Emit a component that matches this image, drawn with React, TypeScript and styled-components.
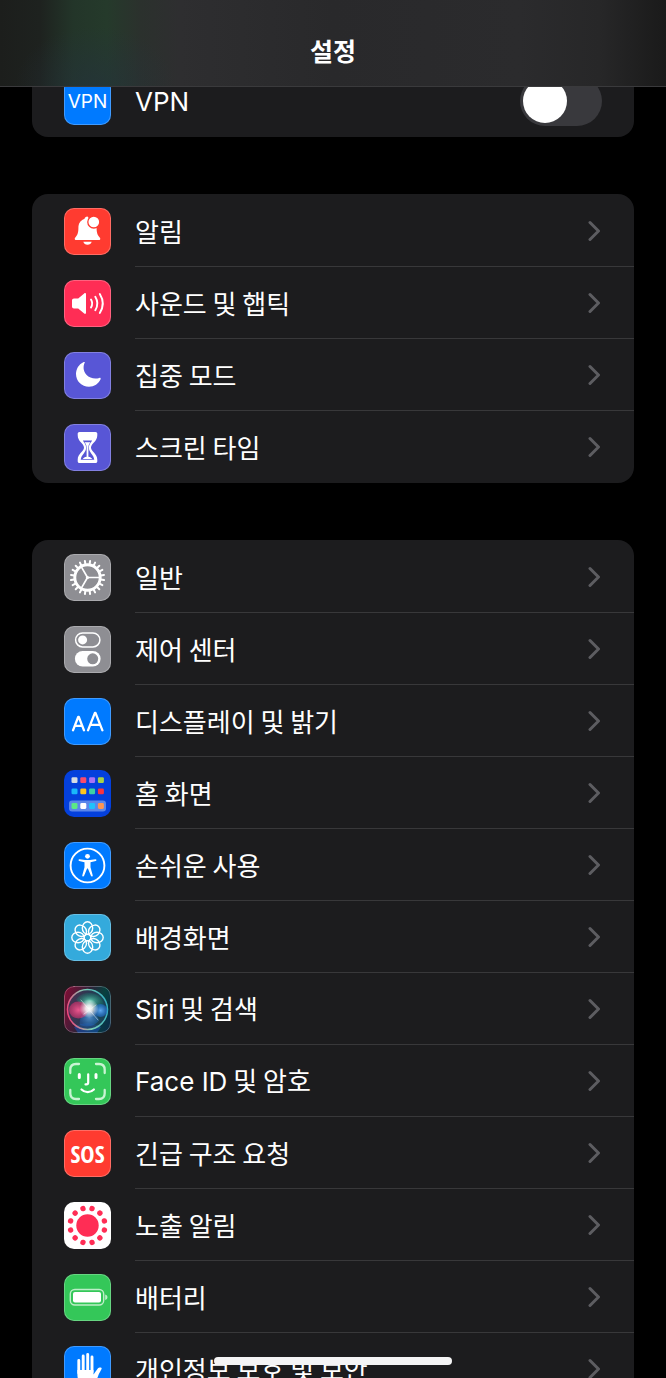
import React, { useState } from 'react';
import styled, { createGlobalStyle } from 'styled-components';

const GlobalStyle = createGlobalStyle`
  * { box-sizing: border-box; }
  html, body { margin: 0; background: #000; }
  body {
    color: #fff;
    font-family: "Noto Sans CJK KR", sans-serif;
    font-size: 26px;
    -webkit-font-smoothing: antialiased;
  }
`;

const Screen = styled.div`
  position: relative;
  height: 100vh;
  overflow: hidden;
  background: #000;
`;

const Header = styled.header`
  position: fixed;
  inset: 0 0 auto 0;
  z-index: 2;
  padding: 34px 32px 20px;
  border-bottom: 1px solid #3a3a3c;
  text-align: center;
  background:
    radial-gradient(ellipse 80px 60px at 95px 100%, rgba(36, 50, 62, 0.6), rgba(36, 50, 62, 0)),
    linear-gradient(to right, #1c1e1c 0, #1e221f 6%, #233529 11%, #253a2b 16%, #2b312d 21%, #2e2e30 27%, #29292b 50%, #2b2b2d 78%, #272728 90%, #1a1a1a 100%);
`;

const Title = styled.h1`
  margin: 0;
  font-size: 25px;
  line-height: 32px;
  font-weight: 600;
`;

const List = styled.main`
  display: flex;
  flex-direction: column;
  gap: 57px;
  padding: 64px 32px 0;
`;

const Group = styled.section`
  flex-shrink: 0;
  overflow: hidden;
  padding-top: 1px;
  border-radius: 16px;
  background: #1c1c1e;
`;

const Row = styled.a`
  display: flex;
  align-items: center;
  gap: 24px;
  height: 72px;
  padding-left: 32px;
  color: inherit;
  text-decoration: none;
`;

const SwitchRow = styled(Row).attrs({ as: 'label' })``;

const RowBody = styled.span`
  flex: 1;
  align-self: stretch;
  display: flex;
  align-items: center;
  justify-content: space-between;
  padding-right: 32px;
  border-bottom: 1px solid #38383a;
  line-height: 36px;

  ${Row}:last-child > & { border-bottom-color: transparent; }
`;

const Latin = styled.span`
  font-family: Inter, sans-serif;
`;

const Tile = styled.span<{ $bg: string; $plain?: boolean }>`
  flex: none;
  display: block;
  width: 47px;
  height: 47px;
  overflow: hidden;
  border-radius: 10px;
  background: ${(p) => p.$bg};
  box-shadow: ${(p) => (p.$plain ? 'none' : 'inset 0 0 0 1px rgba(255, 255, 255, 0.25)')};

  svg { display: block; width: 47px; height: 47px; }
`;

const TileText = styled.span<{ $size: number; $weight: number; $family: string }>`
  display: block;
  text-align: center;
  white-space: nowrap;
  line-height: 47px;
  font-family: ${(p) => p.$family};
  font-size: ${(p) => p.$size}px;
  font-weight: ${(p) => p.$weight};
`;

const Switch = styled.input`
  appearance: none;
  display: flex;
  align-items: center;
  width: 82px;
  height: 50px;
  margin: 0;
  padding: 3px;
  border-radius: 25px;
  background: #39393d;

  &::before {
    content: '';
    width: 44px;
    height: 44px;
    border-radius: 50%;
    background: #fff;
  }
  &:checked { background: #34c759; justify-content: flex-end; }
`;

const HomeIndicator = styled.div`
  position: fixed;
  bottom: 13px;
  left: 50%;
  z-index: 2;
  width: 238px;
  height: 8px;
  margin-left: -119px;
  border-radius: 4px;
  background: #f4f4f5;
`;

const Chevron = () => (
  <svg width="14" height="22" viewBox="0 0 14 22" fill="none" stroke="#5d5d61" strokeWidth="3" strokeLinecap="round" strokeLinejoin="round" aria-hidden="true">
    <path d="M2 2.500 L10.500 11 L2 19.500" />
  </svg>
);

const Svg = ({ children }: { children: React.ReactNode }) => (
  <svg viewBox="0 0 47 47" fill="none" strokeLinecap="round" strokeLinejoin="round" aria-hidden="true">
    {children}
  </svg>
);

const around = (n: number, offset = 0) => Array.from({ length: n }, (_, i) => offset + (360 / n) * i);

const Bell = () => (
  <Svg>
    <path fill="#fff" d="M23.500 8.500c-1.700 0-2.800 1-3.100 2.400-4.200 1.400-6 4.600-6 9.100 0 5-1.100 7.300-2.700 9-.7.700-1 1.200-1 1.700 0 .8.500 1.300 1.500 1.300h22.600c1 0 1.500-.5 1.500-1.300 0-.5-.3-1-1-1.700-1.600-1.700-2.700-4-2.700-9z" />
    <path fill="#fff" d="M19.300 33.700h8.400c-.5 1.800-2.100 3-4.200 3s-3.700-1.200-4.200-3z" />
    <circle cx="29.800" cy="14" r="6" fill="#fff" stroke="#ff3b30" strokeWidth="1.300" />
  </Svg>
);

const Speaker = () => (
  <Svg>
    <path fill="#fff" d="M10 18.500h4.200l6-5.100c.9-.7 1.800-.3 1.800.8v18.600c0 1.100-.9 1.500-1.800.8l-6-5.100H10c-1.200 0-2-.8-2-2v-6c0-1.200.8-2 2-2z" />
    <path stroke="#fff" strokeWidth="1.900" d="M27 19.500c1.500 2.500 1.500 5.500 0 8M31.300 16.800c2.600 4.200 2.600 9.200 0 13.400M35.800 14c3.900 6.200 3.900 12.800 0 19" />
  </Svg>
);

const Moon = () => (
  <Svg>
    <path fill="#fff" d="M20.700 10.700c-1.700 3.300-1.600 8.400 1.700 12 3.300 3.500 8.400 4.700 12.900 3.200 1-.3 1.700.3 1.300 1.400-2 4.500-6.400 7.400-11.600 7.400-7.300 0-13-5.600-13-12.700 0-5 2.700-9.600 7.300-11.800 1-.5 1.800-.4 1.400.5z" />
  </Svg>
);

const Hourglass = () => (
  <Svg>
    <path fill="#fff" d="M15.500 8h16c1.100 0 1.800.8 1.800 1.800v1.400c0 6.300-6.300 8.400-6.300 12.300s6.300 6 6.300 12.300v1.400c0 1-.7 1.800-1.800 1.800h-16c-1.100 0-1.800-.8-1.800-1.800v-1.400c0-6.300 6.300-8.400 6.300-12.300s-6.300-6-6.300-12.300V9.800c0-1 .7-1.800 1.800-1.800z" />
    <path fill="#5856d6" d="M18.800 16.600h9.400c-1.500 2.300-3.300 4-3.300 6.900 0 5.500 4.800 6.800 5.400 12.300H16.700c.6-5.500 5.400-6.800 5.400-12.300 0-2.900-1.800-4.600-3.300-6.900z" />
    <path fill="#fff" d="M20.500 18.200h6c-1 1.500-2.100 2.300-2.100 5.300v9.200c1.700.2 3.200.9 3.800 2.300h-9.400c.6-1.400 2.100-2.100 3.800-2.300v-9.200c0-3-1.100-3.800-2.100-5.300z" />
  </Svg>
);

const Gear = () => (
  <Svg>
    <circle cx="23.500" cy="23.500" r="12.700" stroke="#fff" strokeWidth="2.900" />
    {around(20, 9).map((a) => (
      <path key={a} transform={`rotate(${a} 23.500 23.500)`} stroke="#fff" strokeWidth="2" d="M23.500 10V6.800" />
    ))}
    {around(3).map((a) => (
      <path key={a} transform={`rotate(${a} 23.500 23.500)`} stroke="#fff" strokeWidth="1.700" d="M23.500 23.500H35.500" />
    ))}
    <circle cx="23.500" cy="23.500" r="1.600" fill="#fff" />
  </Svg>
);

const Toggles = () => (
  <Svg>
    <rect x="11.600" y="6.900" width="24.300" height="14" rx="7" stroke="#fff" strokeWidth="1.500" />
    <circle cx="18.600" cy="13.900" r="4.500" fill="#fff" />
    <rect x="10.900" y="25.100" width="25.700" height="15.400" rx="7.700" fill="#fff" />
    <circle cx="28.700" cy="32.800" r="5.500" fill="#8e8e93" />
  </Svg>
);

const LetterSizes = () => (
  <Svg>
    <path stroke="#fff" strokeWidth="2.300" d="M9 32.300l5.200-13.300h.6L20 32.300M11 27.900h7" />
    <path stroke="#fff" strokeWidth="2.300" d="M24 32.300l6.900-17.500h.6l6.900 17.500M26.300 26.800h9.800" />
  </Svg>
);

const appColors = [
  ['#d5dbe3', '#fb4b6b', '#a872f5', '#a8d246'],
  ['#19b7fa', '#fdc51d', '#3bd2a4', '#fa3340'],
  ['#5bea85', '#ffffff', '#20c2fb', '#fd9552'],
];

const HomeGrid = () => (
  <Svg>
    <rect x="5" y="30.500" width="37" height="11" rx="3" fill="#5a86ea" />
    {appColors.map((line, r) =>
      line.map((color, c) => (
        <rect key={`${r}${c}`} x={7.500 + c * 8.800} y={[7.300, 18.500, 33.100][r]} width="6" height="5.800" rx="1.300" fill={color} />
      )),
    )}
  </Svg>
);

const Accessibility = () => (
  <Svg>
    <circle cx="23.500" cy="23.500" r="16.900" stroke="#fff" strokeWidth="1.900" />
    <circle cx="23.500" cy="14.300" r="2.400" fill="#fff" />
    <path fill="#fff" d="M15.500 17.300l5.500.8h5l5.500-.8c1.100-.1 1.400 1.300.3 1.600l-5.300 1.400v5l2.200 8c.3 1.300-1.300 1.700-1.800.5l-3-7.300h-.8l-3 7.300c-.5 1.200-2.100.8-1.800-.5l2.200-8v-5l-5.300-1.400c-1.100-.3-.8-1.700.3-1.600z" />
  </Svg>
);

const Flower = () => (
  <Svg>
    {around(8).map((a) => (
      <ellipse key={a} cx="23.500" cy="14" rx="5.200" ry="6.200" transform={`rotate(${a} 23.500 23.500)`} stroke="#fff" strokeWidth="1.400" />
    ))}
    <circle cx="23.500" cy="23.500" r="3.200" stroke="#fff" strokeWidth="1.200" />
  </Svg>
);

const Siri = () => (
  <Svg>
    <defs>
      <linearGradient id="siriBack" x1="0" y1="0.300" x2="1" y2="0.600">
        <stop offset="0" stopColor="#7a0f35" />
        <stop offset="0.450" stopColor="#2c2238" />
        <stop offset="0.750" stopColor="#07413f" />
        <stop offset="1" stopColor="#0a2f48" />
      </linearGradient>
      <linearGradient id="siriRing" x1="0" y1="0.600" x2="1" y2="0.400">
        <stop offset="0" stopColor="#f0447c" />
        <stop offset="0.500" stopColor="#7fd0b5" />
        <stop offset="1" stopColor="#35b0c0" />
      </linearGradient>
      <radialGradient id="siriPink"><stop offset="0" stopColor="#ff5c96" stopOpacity="0.900" /><stop offset="1" stopColor="#e0306e" stopOpacity="0.550" /></radialGradient>
      <radialGradient id="siriTeal"><stop offset="0" stopColor="#6fd8bd" stopOpacity="0.950" /><stop offset="1" stopColor="#0f8a70" stopOpacity="0.200" /></radialGradient>
      <radialGradient id="siriBlue"><stop offset="0" stopColor="#69b4ff" stopOpacity="0.900" /><stop offset="1" stopColor="#1b70dc" stopOpacity="0.500" /></radialGradient>
      <radialGradient id="siriGlow"><stop offset="0" stopColor="#fff" /><stop offset="0.350" stopColor="#fff" stopOpacity="0.850" /><stop offset="1" stopColor="#fff" stopOpacity="0" /></radialGradient>
    </defs>
    <rect width="47" height="47" fill="url(#siriBack)" />
    <path fill="#1b4cad" opacity="0.600" d="M10 41c8-5 19-5 27 0l-4 6H14z" />
    <circle cx="23.500" cy="23.500" r="20" fill="#2b4a68" fillOpacity="0.550" stroke="url(#siriRing)" strokeWidth="1.500" />
    <path fill="url(#siriTeal)" d="M12 14C18 3 36 5 39.500 17c1 5-4 6-14 6.500C20 20 16 17 12 14z" />
    <path fill="url(#siriBlue)" opacity="0.700" d="M25 23c-7 4-10 9-9 16 7 3 16 1 19-5-2-5-5-8-10-11z" />
    <ellipse cx="14.500" cy="24" rx="9.500" ry="8.500" fill="url(#siriPink)" />
    <ellipse cx="36.500" cy="24.500" rx="7" ry="6.500" fill="url(#siriBlue)" />
    <circle cx="25" cy="22.500" r="9.500" fill="url(#siriGlow)" />
    <path stroke="#fff" strokeOpacity="0.450" strokeWidth="1" d="M17 14l17 20M20 28l12-9" />
    <rect x="0.500" y="0.500" width="46" height="46" rx="9.500" stroke="#fff" strokeOpacity="0.250" />
  </Svg>
);

const Face = () => (
  <Svg>
    <path stroke="#c9f4d3" strokeWidth="2.300" d="M6.300 15v-3.200C6.300 8 8.300 6 12 6h3M32 6h3c3.700 0 5.700 2 5.700 5.800V15M6.300 32v3.200c0 3.800 2 5.800 5.700 5.800h3M32 41h3c3.700 0 5.700-2 5.700-5.800V32" />
    <path stroke="#fff" strokeWidth="3" d="M15.300 16.500v3M32 16.500v3" />
    <path stroke="#fff" strokeWidth="2.200" d="M24.200 16.300v8.200c0 1.300-.6 1.900-1.900 1.900h-.8M17.500 31.500c3.500 3.500 8.900 3.500 12.400 0" />
  </Svg>
);

const Exposure = () => (
  <Svg>
    <circle cx="23.500" cy="23.500" r="11.200" fill="#ff2d55" />
    {around(12, 15).map((a) => (
      <circle key={a} cx="23.500" cy="6" r="2.700" transform={`rotate(${a} 23.500 23.500)`} fill="#ff2d55" />
    ))}
  </Svg>
);

const Battery = () => (
  <Svg>
    <rect x="6.300" y="15.500" width="33.400" height="15.500" rx="4.500" stroke="#bdeec8" strokeWidth="1.400" />
    <rect x="9" y="18" width="28" height="10.500" rx="2" fill="#fff" />
    <path fill="#bdeec8" d="M41.200 20.500c3 .9 3 4.600 0 5.500z" />
  </Svg>
);

const Hand = () => (
  <Svg>
    <path stroke="#fff" strokeWidth="2.900" d="M14.800 14.500V27M19.200 10V25M23.700 8.500V25M28 11V26" />
    <path fill="#fff" d="M13.400 24h16.100v4.500c1.200-1.500 2.600-4 4.300-6.100 1-1.200 3.900-1.300 3.900-.2 0 1-2.200 4.300-3.500 7.500-2 5.800-4.500 9.800-10.500 9.800-6.500 0-10.300-4-10.300-11z" />
  </Svg>
);

type Item = { label: string; latin?: string; icon: React.ReactNode; bg: string; plain?: boolean };

const attention: Item[] = [
  { label: '알림', icon: <Bell />, bg: '#ff3b30' },
  { label: '사운드 및 햅틱', icon: <Speaker />, bg: '#ff2d55' },
  { label: '집중 모드', icon: <Moon />, bg: '#5856d6' },
  { label: '스크린 타임', icon: <Hourglass />, bg: '#5856d6' },
];

const general: Item[] = [
  { label: '일반', icon: <Gear />, bg: '#8e8e93' },
  { label: '제어 센터', icon: <Toggles />, bg: '#8e8e93' },
  { label: '디스플레이 및 밝기', icon: <LetterSizes />, bg: '#007aff' },
  { label: '홈 화면', icon: <HomeGrid />, bg: '#0440dc', plain: true },
  { label: '손쉬운 사용', icon: <Accessibility />, bg: '#007aff' },
  { label: '배경화면', icon: <Flower />, bg: '#34aadc' },
  { latin: 'Siri', label: ' 및 검색', icon: <Siri />, bg: '#29202f', plain: true },
  { latin: 'Face ID', label: ' 및 암호', icon: <Face />, bg: '#34c759' },
  {
    label: '긴급 구조 요청',
    icon: <TileText $size={24} $weight={700} $family='"Open Sans Condensed", "Liberation Sans Narrow", "DejaVu Sans Condensed", sans-serif'>SOS</TileText>,
    bg: '#ff3b30',
  },
  { label: '노출 알림', icon: <Exposure />, bg: '#ffffff', plain: true },
  { label: '배터리', icon: <Battery />, bg: '#34c759' },
  { label: '개인정보 보호 및 보안', icon: <Hand />, bg: '#007aff' },
];

const SettingsGroup = ({ items }: { items: Item[] }) => (
  <Group>
    {items.map((item) => (
      <Row key={item.label} href="#">
        <Tile $bg={item.bg} $plain={item.plain}>{item.icon}</Tile>
        <RowBody>
          <span>
            {item.latin && <Latin>{item.latin}</Latin>}
            {item.label}
          </span>
          <Chevron />
        </RowBody>
      </Row>
    ))}
  </Group>
);

export default function App() {
  const [vpn, setVpn] = useState(false);
  return (
    <>
      <GlobalStyle />
      <Screen>
        <Header>
          <Title>설정</Title>
        </Header>
        <List>
          <Group>
            <SwitchRow htmlFor="vpn">
              <Tile $bg="#007aff">
                <TileText $size={19} $weight={400} $family="Inter, sans-serif">VPN</TileText>
              </Tile>
              <RowBody>
                <span>
                  <Latin>VPN</Latin>
                </span>
                <Switch id="vpn" type="checkbox" checked={vpn} onChange={(e) => setVpn(e.target.checked)} />
              </RowBody>
            </SwitchRow>
          </Group>
          <SettingsGroup items={attention} />
          <SettingsGroup items={general} />
        </List>
        <HomeIndicator />
      </Screen>
    </>
  );
}
